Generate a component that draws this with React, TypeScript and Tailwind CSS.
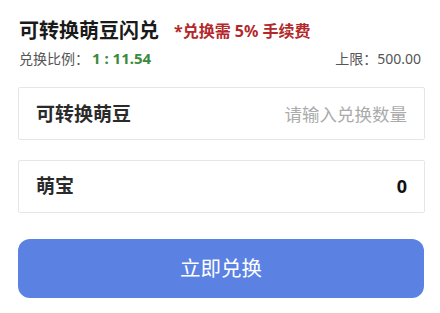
import React from "react";

export default function App() {
  const font = { fontFamily: '"Noto Sans", "Noto Sans CJK SC", sans-serif' };
  return (
    <div className="w-[440px] h-[313px] bg-white overflow-hidden" style={font}>
      <div className="flex flex-col px-[18px] pt-[17px]">
        <div className="flex items-center h-[28px]">
          <span className="text-[20px] font-bold text-[#1a1a1a] leading-[28px] pl-[1px]">可转换萌豆闪兑</span>
          <span className="ml-[15px] text-[16px] font-bold text-[#b3282b] leading-[28px]">*兑换需 5% 手续费</span>
        </div>
        <div className="flex items-center justify-between h-[20px] mt-[3px] pl-[1px]">
          <div className="flex items-center">
            <span className="text-[14px] text-[#555555]">兑换比例：</span>
            <span className="ml-[3px] text-[15px] font-bold text-[#3b8a3e]">1 : 11.54</span>
          </div>
          <span className="text-[14px] text-[#555555] pr-[1px]">上限：500.00</span>
        </div>
        <div className="mt-[19px] h-[53px] border border-[#e6e6e6] rounded-[2px] flex items-center justify-between px-[17px] w-[407px]">
          <span className="text-[19px] font-bold text-[#2a2a2a] mt-[2px]">可转换萌豆</span>
          <span className="text-[17.5px] text-[#ababab] mt-[2px]">请输入兑换数量</span>
        </div>
        <div className="mt-[20px] h-[53px] border border-[#e6e6e6] rounded-[2px] flex items-center justify-between px-[17px] w-[407px]">
          <span className="text-[19px] font-bold text-[#2a2a2a]">萌宝</span>
          <span className="text-[18px] font-bold text-[#111111]">0</span>
        </div>
        <button className="mt-[26px] h-[59px] w-[406px] rounded-[12px] bg-[#5b82e3] text-white text-[20.5px] flex items-center justify-center">
          立即兑换
        </button>
      </div>
    </div>
  );
}
